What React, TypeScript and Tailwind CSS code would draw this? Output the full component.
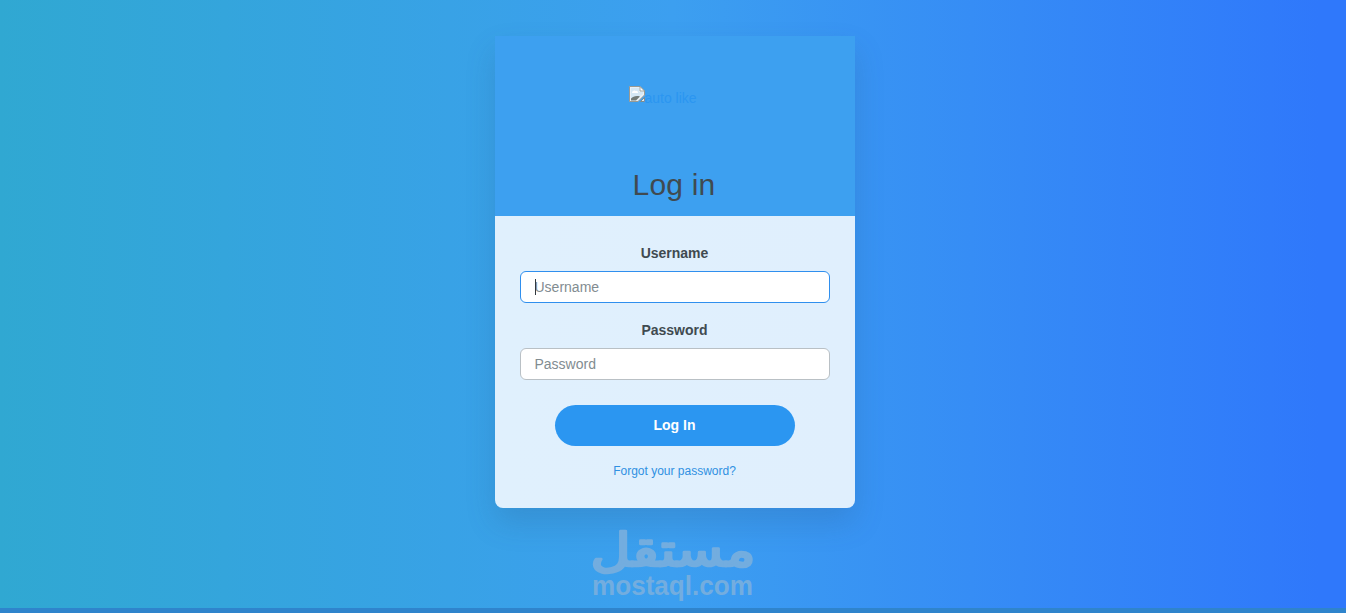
import { useState } from "react";

const labelClass =
  "block pr-px text-center text-sm font-bold leading-5 text-[#404a50]";
const inputClass =
  "mt-2 block h-8 w-full rounded-md border bg-white px-[13.5px] text-sm text-[#404a50] outline-none placeholder:text-[#828c91] placeholder:opacity-100";

function BrokenImageIcon() {
  return (
    <svg width="16" height="16" viewBox="0 0 16 16" className="block shrink-0">
      <path d="M0.5 0.5H11L15.5 5V9L9 15.5H0.5Z" fill="#e9f0f5" stroke="#9a9a93" />
      <path d="M2 2H10V6H14V8L8 12H2Z" fill="#d5e8f5" />
      <path d="M3 7C3 5 5 4 6.5 5C8 4.5 9 5.5 9 7Z" fill="#ffffff" />
      <path d="M2 14.5V12.5C4 10.5 7 9.5 11 10.5L7 14.5Z" fill="#737c78" />
      <path d="M11 0.5V5H15.5Z" fill="#ffffff" stroke="#8e9490" strokeWidth="0.8" />
      <path d="M11.5 15.5L15.5 11.5V15.5Z" fill="#e0e8ec" stroke="#7f877f" strokeWidth="0.9" />
    </svg>
  );
}

function Watermark() {
  return (
    <svg
      width="168"
      height="88"
      viewBox="0 0 168 88"
      className="block overflow-visible"
      fill="#73addf"
    >
      <g transform="translate(84 44.5) scale(1.45 1.2)">
        <text
          textAnchor="middle"
          direction="rtl"
          stroke="#73addf"
          strokeWidth="2.2"
          strokeLinejoin="round"
          className="font-['DejaVu_Sans',sans-serif] text-[38px]"
        >
          مستقل
        </text>
      </g>
      <text
        x="3"
        y="74"
        textLength="161"
        lengthAdjust="spacingAndGlyphs"
        className="font-['Liberation_Sans',Arial,sans-serif] text-[27px] font-bold"
      >
        mostaql.com
      </text>
    </svg>
  );
}

export function LoginForm() {
  const [username, setUsername] = useState("");
  const [password, setPassword] = useState("");

  return (
    <form
      onSubmit={(e) => e.preventDefault()}
      className="flex h-[292px] flex-col rounded-b-lg bg-[linear-gradient(90deg,#e0f0fd,#e0effd)] px-[25px] pt-[27px]"
    >
      <div>
        <label htmlFor="username" className={labelClass}>
          Username
        </label>
        <div className="relative">
          <input
            id="username"
            value={username}
            onChange={(e) => setUsername(e.target.value)}
            placeholder="Username"
            className={`${inputClass} border-[#2f8fee]`}
          />
          {username === "" && (
            <span className="absolute left-[15px] top-2 h-4 w-px bg-[#30383d]" />
          )}
        </div>
      </div>
      <div className="mt-[17px]">
        <label htmlFor="password" className={labelClass}>
          Password
        </label>
        <input
          id="password"
          type="password"
          value={password}
          onChange={(e) => setPassword(e.target.value)}
          placeholder="Password"
          className={`${inputClass} border-[#b9c0c5]`}
        />
      </div>
      <button
        type="submit"
        className="mx-auto mt-[25px] h-[41px] w-60 rounded-full bg-[#2b96f1] pb-0.5 pr-px text-sm font-bold text-white"
      >
        Log In
      </button>
      <a
        href="#"
        className="mt-4 pr-px text-center text-xs leading-[18px] text-[#2f90e2]"
      >
        Forgot your password?
      </a>
    </form>
  );
}

export default function App() {
  return (
    <div className="flex h-[613px] w-full flex-col overflow-hidden bg-[linear-gradient(90deg,#30a8d2_0%,#3c9ff0_50%,#2f78fb_98%)] pt-9 font-['Liberation_Sans',Arial,sans-serif]">
      <main className="ml-[495px] w-[360px] rounded-b-lg shadow-[0_15px_30px_rgba(40,80,120,0.2)]">
        <header className="flex h-[180px] flex-col items-center bg-[#3da0f0] pt-[50px]">
          <a href="#" className="flex h-6 pr-6 text-sm leading-6 text-[#2b96f1]">
            <BrokenImageIcon />
            <span className="-ml-px">auto like</span>
          </a>
          <h1 className="mt-[55px] pr-0.5 text-[30px] leading-10 tracking-[0.2px] text-[#404a50]">
            Log in
          </h1>
        </header>
        <LoginForm />
      </main>
      <div className="ml-[589px] mt-[13px] h-[87px] shrink-0">
        <Watermark />
      </div>
      <footer className="mt-auto h-[5px] shrink-0 bg-[#2f84cc]" />
    </div>
  );
}
